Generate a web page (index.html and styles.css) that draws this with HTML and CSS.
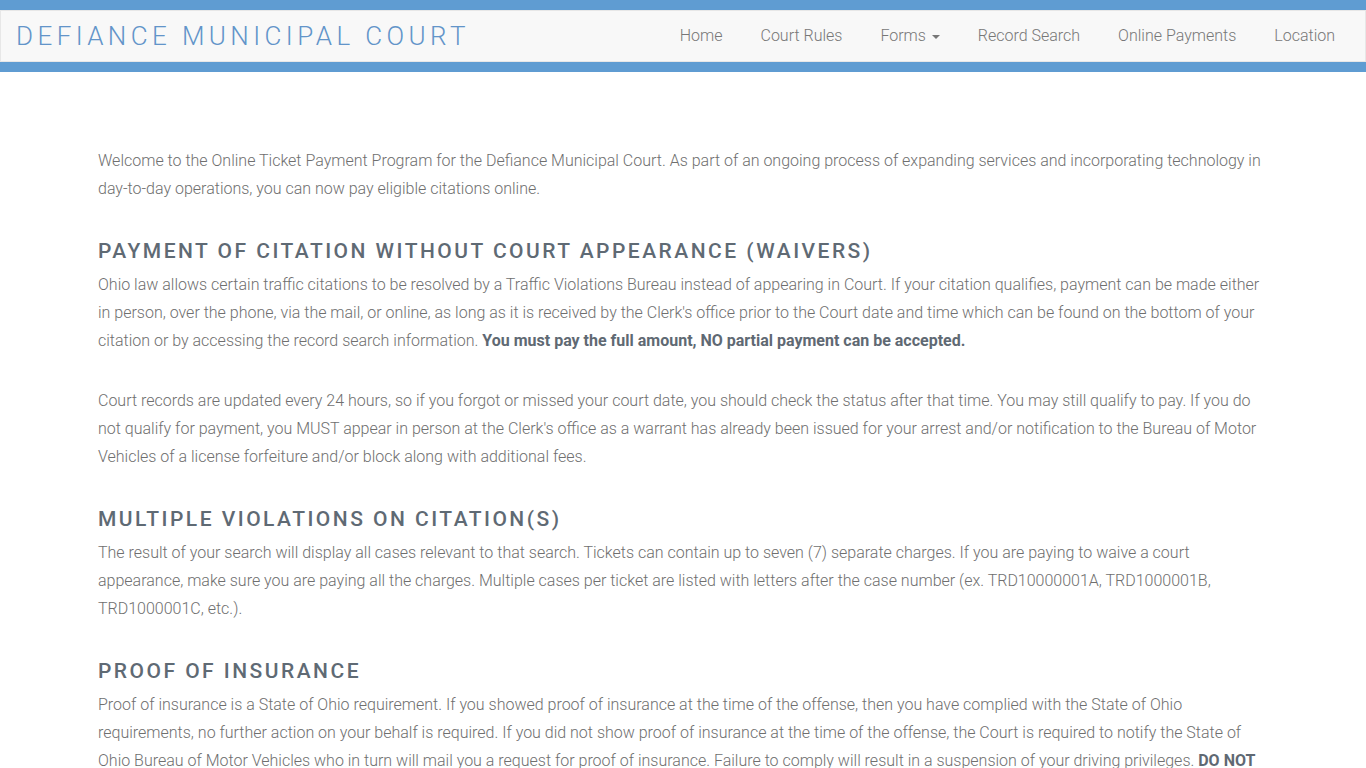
FILE: index.html
```html
<!DOCTYPE html>
<html lang="en">
<head>
<meta charset="utf-8">
<title>Defiance Municipal Court</title>
<link rel="stylesheet" href="styles.css">
</head>
<body>
<header class="site-header">
  <nav class="navbar">
    <a class="brand" href="#">DEFIANCE MUNICIPAL COURT</a>
    <ul class="nav">
      <li><a href="#">Home</a></li>
      <li><a href="#">Court Rules</a></li>
      <li><a href="#">Forms <span class="caret"></span></a></li>
      <li><a href="#">Record Search</a></li>
      <li><a href="#">Online Payments</a></li>
      <li><a href="#">Location</a></li>
    </ul>
  </nav>
</header>

<main class="container">
  <p>Welcome to the Online Ticket Payment Program for the Defiance Municipal Court. As part of an ongoing process of expanding services and incorporating technology in day-to-day operations, you can now pay eligible citations online.</p>

  <h4>Payment of Citation Without Court Appearance (Waivers)</h4>
  <p>Ohio law allows certain traffic citations to be resolved by a Traffic Violations Bureau instead of appearing in Court. If your citation qualifies, payment can be made either in person, over the phone, via the mail, or online, as long as it is received by the Clerk's office prior to the Court date and time which can be found on the bottom of your citation or by accessing the record search information. <strong>You must pay the full amount, NO partial payment can be accepted.</strong></p>
  <p>Court records are updated every 24 hours, so if you forgot or missed your court date, you should check the status after that time. You may still qualify to pay. If you do not qualify for payment, you MUST appear in person at the Clerk's office as a warrant has already been issued for your arrest and/or notification to the Bureau of Motor Vehicles of a license forfeiture and/or block along with additional fees.</p>

  <h4>Multiple Violations on Citation(s)</h4>
  <p>The result of your search will display all cases relevant to that search. Tickets can contain up to seven (7) separate charges. If you are paying to waive a court appearance, make sure you are paying all the charges. Multiple cases per ticket are listed with letters after the case number (ex. TRD10000001A, TRD1000001B, TRD1000001C, etc.).</p>

  <h4>Proof of Insurance</h4>
  <p>Proof of insurance is a State of Ohio requirement. If you showed proof of insurance at the time of the offense, then you have complied with the State of Ohio requirements, no further action on your behalf is required. If you did not show proof of insurance at the time of the offense, the Court is required to notify the State of Ohio Bureau of Motor Vehicles who in turn will mail you a request for proof of insurance. Failure to comply will result in a suspension of your driving privileges. <strong>DO NOT</strong> send proof of insurance to the Court unless instructed to do so.</p>
</main>
</body>
</html>
```
FILE: styles.css
```css
html, body {
  margin: 0;
  padding: 0;
}

body {
  font-family: Roboto, "Liberation Sans", Arial, sans-serif;
  font-weight: 300;
  font-size: 16px;
  line-height: 28px;
  color: #6f6f6f;
  background: #fff;
}

a {
  text-decoration: none;
}

/* Header: blue bands above and below the light navbar */
.site-header {
  border-top: 10px solid #5f9cd2;
  border-bottom: 10px solid #5f9cd2;
}

.navbar {
  display: flex;
  align-items: center;
  justify-content: space-between;
  height: 50px;
  background: #f8f8f8;
  border: 1px solid #e7e7e7;
}

.brand {
  padding-left: 15px;
  font-size: 26px;
  font-weight: 300;
  letter-spacing: 4.4px;
  color: #6294c9;
  line-height: 50px;
}

.nav {
  display: flex;
  list-style: none;
  margin: 0;
  padding: 0 11px 0 0;
}

.nav a {
  display: block;
  padding: 0 19px;
  line-height: 50px;
  color: #777;
  font-size: 16px;
  font-weight: 300;
}

.caret {
  display: inline-block;
  width: 0;
  height: 0;
  margin-left: 2px;
  vertical-align: middle;
  border-top: 4px solid #777;
  border-left: 4px solid transparent;
  border-right: 4px solid transparent;
}

/* Main content column */
.container {
  width: 1170px;
  margin: 75px auto 0;
}

.container p {
  margin: 0 0 32px;
}

.container strong {
  font-weight: 700;
  color: #5f6973;
}

.container h4 {
  margin: 0 0 8px;
  padding-top: 4px;
  font-size: 21px;
  line-height: 24px;
  font-weight: 500;
  letter-spacing: 2.47px;
  text-transform: uppercase;
  color: #5f6a74;
}
```
